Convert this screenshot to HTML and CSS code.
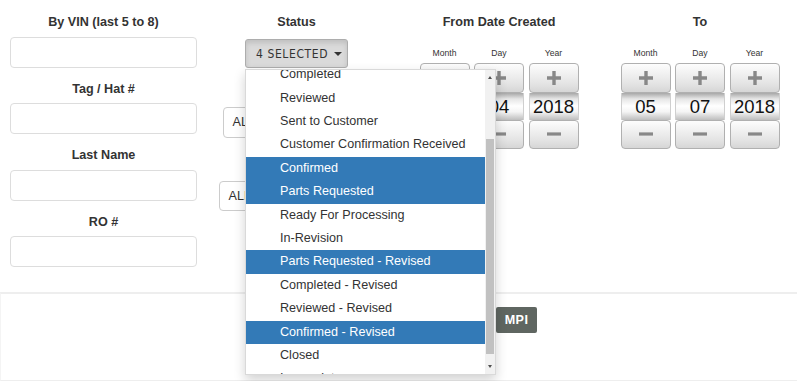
FILE: index.html
```html
<!DOCTYPE html>
<html>
<head>
<meta charset="utf-8">
<link rel="stylesheet" href="styles.css">
</head>
<body>
<div class="page">
  <div class="filters">
    <div class="col text-col">
      <div class="field">
        <div class="label">By VIN (last 5 to 8)</div>
        <input class="input" type="text">
      </div>
      <div class="field">
        <div class="label">Tag / Hat #</div>
        <input class="input" type="text">
      </div>
      <div class="field">
        <div class="label">Last Name</div>
        <input class="input" type="text">
      </div>
      <div class="field">
        <div class="label">RO #</div>
        <input class="input" type="text">
      </div>
    </div>

    <div class="col status-col">
      <div class="label">Status</div>
      <div class="ms-wrap">
        <button class="ms-btn">4 SELECTED <span class="caret"></span></button>
        <div class="ms-menu">
          <div class="ms-list">
            <div class="ms-item">Completed</div>
            <div class="ms-item">Reviewed</div>
            <div class="ms-item">Sent to Customer</div>
            <div class="ms-item">Customer Confirmation Received</div>
            <div class="ms-item active">Confirmed</div>
            <div class="ms-item active">Parts Requested</div>
            <div class="ms-item">Ready For Processing</div>
            <div class="ms-item">In-Revision</div>
            <div class="ms-item active">Parts Requested - Revised</div>
            <div class="ms-item">Completed - Revised</div>
            <div class="ms-item">Reviewed - Revised</div>
            <div class="ms-item active">Confirmed - Revised</div>
            <div class="ms-item">Closed</div>
            <div class="ms-item">Incomplete</div>
          </div>
          <div class="scrollbar">
            <div class="sb-arrow"><span class="tri up"></span></div>
            <div class="sb-track"><div class="sb-thumb"></div></div>
            <div class="sb-arrow"><span class="tri down"></span></div>
          </div>
        </div>
      </div>
      <div class="all-box all-1">ALL Advisors</div>
      <div class="all-box all-2">ALL Technicians</div>
    </div>

    <div class="col date-col">
      <div class="label">From Date Created</div>
      <div class="spinners">
        <div class="spin">
          <div class="sub">Month</div>
          <div class="spin-btn"><svg width="14" height="14" viewBox="0 0 14 14"><path d="M7 0V14M0 7H14" stroke="#888" stroke-width="3.4"/></svg></div>
          <div class="spin-val">05</div>
          <div class="spin-btn"><svg width="14" height="4" viewBox="0 0 14 4"><path d="M0 2H14" stroke="#888" stroke-width="3.2"/></svg></div>
        </div>
        <div class="spin">
          <div class="sub">Day</div>
          <div class="spin-btn"><svg width="14" height="14" viewBox="0 0 14 14"><path d="M7 0V14M0 7H14" stroke="#888" stroke-width="3.4"/></svg></div>
          <div class="spin-val">04</div>
          <div class="spin-btn"><svg width="14" height="4" viewBox="0 0 14 4"><path d="M0 2H14" stroke="#888" stroke-width="3.2"/></svg></div>
        </div>
        <div class="spin">
          <div class="sub">Year</div>
          <div class="spin-btn"><svg width="14" height="14" viewBox="0 0 14 14"><path d="M7 0V14M0 7H14" stroke="#888" stroke-width="3.4"/></svg></div>
          <div class="spin-val">2018</div>
          <div class="spin-btn"><svg width="14" height="4" viewBox="0 0 14 4"><path d="M0 2H14" stroke="#888" stroke-width="3.2"/></svg></div>
        </div>
      </div>
    </div>

    <div class="col date-col to-col">
      <div class="label">To</div>
      <div class="spinners">
        <div class="spin">
          <div class="sub">Month</div>
          <div class="spin-btn"><svg width="14" height="14" viewBox="0 0 14 14"><path d="M7 0V14M0 7H14" stroke="#888" stroke-width="3.4"/></svg></div>
          <div class="spin-val">05</div>
          <div class="spin-btn"><svg width="14" height="4" viewBox="0 0 14 4"><path d="M0 2H14" stroke="#888" stroke-width="3.2"/></svg></div>
        </div>
        <div class="spin">
          <div class="sub">Day</div>
          <div class="spin-btn"><svg width="14" height="14" viewBox="0 0 14 14"><path d="M7 0V14M0 7H14" stroke="#888" stroke-width="3.4"/></svg></div>
          <div class="spin-val">07</div>
          <div class="spin-btn"><svg width="14" height="4" viewBox="0 0 14 4"><path d="M0 2H14" stroke="#888" stroke-width="3.2"/></svg></div>
        </div>
        <div class="spin">
          <div class="sub">Year</div>
          <div class="spin-btn"><svg width="14" height="14" viewBox="0 0 14 14"><path d="M7 0V14M0 7H14" stroke="#888" stroke-width="3.4"/></svg></div>
          <div class="spin-val">2018</div>
          <div class="spin-btn"><svg width="14" height="4" viewBox="0 0 14 4"><path d="M0 2H14" stroke="#888" stroke-width="3.2"/></svg></div>
        </div>
      </div>
    </div>
  </div>

  <div class="actions">
    <button class="btn-mpi">MPI</button>
  </div>
</div>
</body>
</html>
```

FILE: styles.css
```css
* { box-sizing: border-box; }
body {
  margin: 0;
  font-family: "Liberation Sans", Arial, sans-serif;
  color: #333;
  background: #fff;
}
.page { width: 797px; }
.filters {
  display: grid;
  grid-template-columns: 207px 180px 224px 178px;
  height: 292px;
}
.col {
  display: flex;
  flex-direction: column;
  align-items: center;
  padding-top: 13px;
}
.label {
  font-size: 12.6px;
  font-weight: bold;
  line-height: 18px;
  text-align: center;
  color: #333;
}
.text-col { padding-left: 10px; padding-right: 10px; align-items: stretch; }
.field { display: flex; flex-direction: column; margin-bottom: 12px; }
.field .label { margin-bottom: 5.5px; }
.input {
  display: block;
  width: 187px;
  height: 31px;
  border: 1px solid #ddd;
  border-radius: 4px;
  background: #fff;
  margin: 0;
  outline: none;
}

/* status multiselect */
.status-col { padding-right: 1px; }
.ms-wrap { position: relative; margin-top: 8px; }
.ms-btn {
  display: flex;
  align-items: center;
  gap: 5px;
  width: 103px;
  height: 29px;
  padding: 0 0 0 10px;
  border: 1px solid #adadad;
  border-radius: 3px;
  background: #dadada;
  box-shadow: inset 0 3px 5px rgba(0,0,0,.12);
  font-family: "DejaVu Sans Condensed", "DejaVu Sans", sans-serif;
  font-size: 12px;
  letter-spacing: 0.6px;
  color: #333;
}
.caret {
  display: inline-block;
  width: 0; height: 0;
  border-left: 4px solid transparent;
  border-right: 4px solid transparent;
  border-top: 4px solid #333;
  margin-left: 1px;
}
.ms-menu {
  position: absolute;
  top: 30px;
  left: 0;
  width: 251px;
  height: 306px;
  background: #fff;
  border: 1px solid rgba(0,0,0,.15);
  box-shadow: 0 5px 11px rgba(0,0,0,.18);
  display: flex;
  z-index: 5;
}
.ms-list { flex: 1; overflow: hidden; }
.ms-item {
  height: 23.4px;
  line-height: 23.4px;
  padding-left: 34px;
  font-size: 12.6px;
  color: #333;
  white-space: nowrap;
}
.ms-item:first-child { margin-top: -6.8px; }
.ms-item.active { background: #337ab7; color: #fff; }
.scrollbar {
  width: 10px;
  background: #f1f1f1;
  display: flex;
  flex-direction: column;
}
.sb-arrow { height: 15px; display: flex; align-items: center; justify-content: center; }
.sb-track { flex: 1; display: flex; flex-direction: column; }
.sb-thumb { margin-top: 54px; height: 215px; background: #c1c1c1; margin-left: 1px; margin-right: 1px; }
.tri { width: 0; height: 0; border-left: 2.5px solid transparent; border-right: 2.5px solid transparent; }
.tri.up { border-bottom: 3px solid #505050; }
.tri.down { border-top: 3px solid #505050; }

.all-box {
  height: 31px;
  border: 1px solid #ccc;
  border-radius: 4px;
  background: #fff;
  font-size: 12.6px;
  line-height: 29px;
  padding-left: 9px;
  color: #333;
  white-space: nowrap;
  overflow: hidden;
}
.all-1 { width: 148px; margin-top: 39px; }
.all-2 { width: 156px; margin-top: 43px; height: 30px; line-height: 28px; }

/* date spinners */
.spinners { display: flex; gap: 4.5px; margin-top: 16px; }
.spin { width: 50px; display: flex; flex-direction: column; }
.sub {
  font-size: 8.6px;
  line-height: 12px;
  height: 12px;
  text-align: center;
  margin-bottom: 3.5px;
  color: #333;
}
.spin-btn {
  height: 30px;
  border: 1px solid #b0b0b0;
  border-radius: 4px;
  background: linear-gradient(#fdfdfd, #e4e4e4 70%, #d6d6d6);
  display: flex;
  align-items: center;
  justify-content: center;
}
.spin-btn:last-child { height: 29px; }
.spin-val {
  height: 27px;
  line-height: 27px;
  text-align: center;
  font-size: 18.5px;
  color: #111;
  border-left: 1px solid #cfcfcf;
  border-right: 1px solid #cfcfcf;
  background: linear-gradient(#a8a8a8 0%, #e6e6e6 22%, #ffffff 48%, #f4f4f4 70%, #bdbdbd 100%);
}

/* lower actions */
.actions {
  height: 89px;
  border-top: 2px solid #eee;
  border-left: 1px solid #f4f4f4;
  border-bottom: 1px solid #eee;
  display: flex;
  justify-content: flex-end;
  align-items: flex-start;
  padding-top: 13px;
  padding-right: 260px;
}
.btn-mpi {
  width: 41px;
  height: 26px;
  border: 0;
  border-radius: 2px;
  background: #5f6661;
  color: #fff;
  font-family: "Liberation Sans", Arial, sans-serif;
  font-weight: bold;
  font-size: 12.6px;
  letter-spacing: 0.4px;
  padding: 0;
}
```
